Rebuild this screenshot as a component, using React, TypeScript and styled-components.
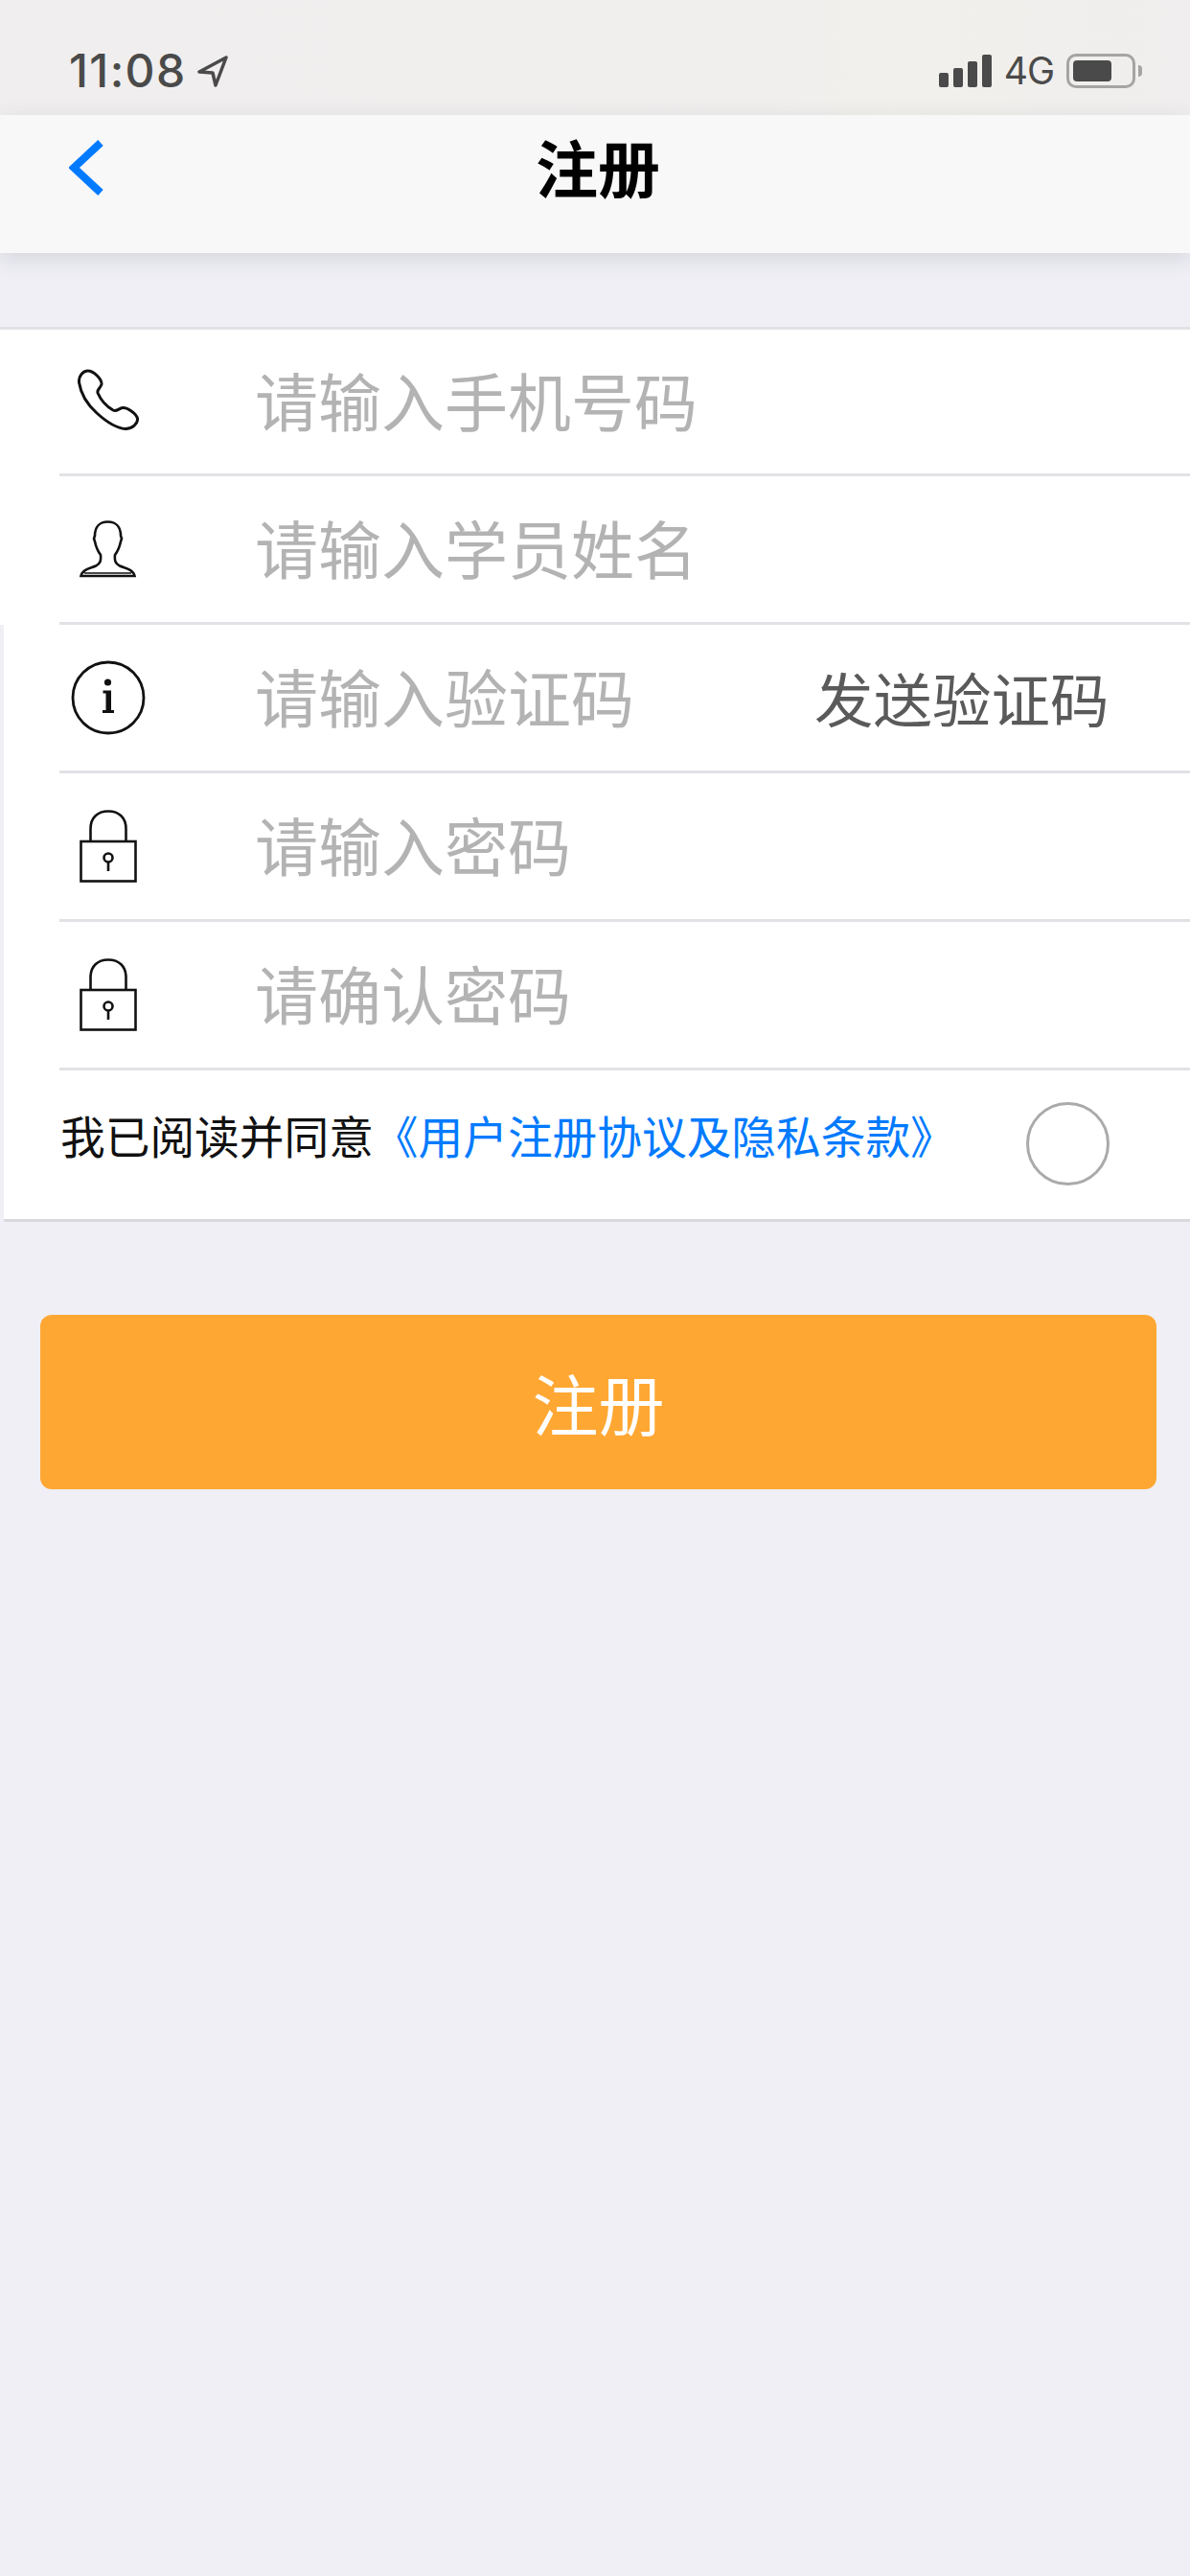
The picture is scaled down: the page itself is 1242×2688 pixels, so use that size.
import React from 'react'
import styled, { createGlobalStyle } from 'styled-components'

interface IField {
  id: number
  icon: React.ReactElement
  hint: string
  flush?: boolean
  action?: string
}

const PhoneIcon = (): React.ReactElement => (
  <svg width="64" height="64" viewBox="0 0 64 64" fill="none" stroke="#111" strokeWidth="3">
    <path d="M10 2 C5 2.500 1 8 1.500 14 C3 24 9 36 20 46 C31 56 42 62 50 62.500 C57 62.500 63 57 62.500 52 C62 47 52 40 47 40.500 C43 41 41 45 37 43 C30 39 24 32 21 25 C20 21 24 20 25 16 C25.500 11 17 1.500 10 2 Z" />
  </svg>
)

const PersonIcon = (): React.ReactElement => (
  <svg width="59" height="60" viewBox="0 0 59 60" fill="none" stroke="#111" strokeWidth="2.6">
    <path d="M1.500 58 H57.500 C56 51 48 50 42 47.500 C37 45 36.500 42 37 36 C40 32 42 27 43 22 L44 19 L43 16 C43 7 38 1.500 29.500 1.500 C21 1.500 16 7 16 16 L15 19 L16 22 C17 27 19 32 22 36 C22.500 42 22 45 17 47.500 C11 50 3 51 1.500 58 Z" />
    <path d="M5 55 H54" strokeWidth="1.500" />
  </svg>
)

const InfoIcon = (): React.ReactElement => (
  <svg width="78" height="78" viewBox="0 0 78 78" fill="none">
    <circle cx="39" cy="39" r="37" stroke="#111" strokeWidth="2.800" />
    <circle cx="38.500" cy="23" r="3.600" fill="#111" />
    <path d="M33.500 31.500 H42 V52 H45 V55 H33 V52 H36.500 V34.500 H33.500 Z" fill="#111" />
  </svg>
)

const LockIcon = (): React.ReactElement => (
  <svg width="60" height="76" viewBox="0 0 60 76" fill="none" stroke="#111" strokeWidth="2.600">
    <path d="M11.500 33 V20 C11.500 8 19 1.500 30 1.500 C41 1.500 48.500 8 48.500 20 V33" />
    <rect x="1.500" y="33" width="57" height="41.500" />
    <circle cx="30" cy="50" r="4.500" />
    <path d="M30 54.500 V64" />
  </svg>
)

const fields: IField[] = [
  { id: 1, icon: <PhoneIcon />, hint: '请输入手机号码', flush: true },
  { id: 2, icon: <PersonIcon />, hint: '请输入学员姓名', flush: true },
  { id: 3, icon: <InfoIcon />, hint: '请输入验证码', action: '发送验证码' },
  { id: 4, icon: <LockIcon />, hint: '请输入密码' },
  { id: 5, icon: <LockIcon />, hint: '请确认密码' },
]

const App = (): React.ReactElement => {
  return (
    <Page>
      <GlobalStyle />
      <StatusBar>
        <TimeWrap>
          <Time>11:08</Time>
          <svg width="32" height="33" viewBox="0 0 32 33" fill="none" stroke="#4a4a4a" strokeWidth="3.500" strokeLinejoin="round">
            <path d="M30 2 L2 17 L16 18 L19 31 Z" />
          </svg>
        </TimeWrap>
        <StatusRight>
          <Signal>
            <SignalBar $height={15} />
            <SignalBar $height={20} />
            <SignalBar $height={27} />
            <SignalBar $height={34} />
          </Signal>
          <Network>4G</Network>
          <Battery>
            <BatteryLevel />
          </Battery>
        </StatusRight>
      </StatusBar>
      <NavBar>
        <svg width="36" height="58" viewBox="0 0 36 58" fill="none" stroke="#007aff" strokeWidth="8" strokeLinejoin="miter">
          <path d="M33 3 L5 29 L33 55" />
        </svg>
        <NavTitle>注册</NavTitle>
      </NavBar>
      <Form>
        {fields.map((el) => (
          <Row key={el.id} $flush={el.flush}>
            <IconCell>{el.icon}</IconCell>
            <Hint>{el.hint}</Hint>
            {el.action && <SendCode>{el.action}</SendCode>}
          </Row>
        ))}
        <AgreeRow>
          <AgreeText>
            我已阅读并同意<AgreeLink>《用户注册协议及隐私条款》</AgreeLink>
          </AgreeText>
          <Radio />
        </AgreeRow>
      </Form>
      <SubmitButton>注册</SubmitButton>
    </Page>
  )
}

const GlobalStyle = createGlobalStyle`
  html, body {
    margin: 0;
    padding: 0;
  }
  body {
    font-family: "Liberation Sans", "Noto Sans CJK SC", sans-serif;
  }
`
const Page = styled.div`
  width: 1242px;
  min-height: 2688px;
  background: #efeff5;
  overflow: hidden;
`
const StatusBar = styled.div`
  height: 120px;
  box-sizing: border-box;
  padding: 56px 57px 0 72px;
  display: flex;
  justify-content: space-between;
  align-items: flex-start;
  background: linear-gradient(90deg, #f0eeee 0%, #f0efee 65%, #f1f0ec 75%, #f0eeee 100%);
`
const TimeWrap = styled.div`
  display: flex;
  align-items: center;
  gap: 11px;
`
const Time = styled.div`
  font-family: Inter, "Liberation Sans", sans-serif;
  font-size: 48px;
  font-weight: 500;
  line-height: 36px;
  letter-spacing: 1.4px;
  color: #4a4a4a;
`
const StatusRight = styled.div`
  display: flex;
  align-items: center;
  height: 36px;
`
const Signal = styled.div`
  display: flex;
  align-items: flex-end;
  gap: 5px;
  height: 34px;
`
const SignalBar = styled.div<{ $height: number }>`
  width: 10px;
  height: ${(p) => p.$height}px;
  border-radius: 2px;
  background: #4a4a4a;
`
const Network = styled.div`
  margin-left: 13px;
  font-family: Inter, "Liberation Sans", sans-serif;
  font-size: 39px;
  line-height: 36px;
  letter-spacing: -1px;
  color: #4a4a4a;
`
const Battery = styled.div`
  position: relative;
  width: 72px;
  height: 36px;
  margin-left: 13px;
  box-sizing: border-box;
  padding: 4px;
  border: 3px solid #a5a3a3;
  border-radius: 10px;
  &::after {
    content: '';
    position: absolute;
    top: 9px;
    right: -10px;
    width: 4px;
    height: 12px;
    border-radius: 0 4px 4px 0;
    background: #a5a3a3;
  }
`
const BatteryLevel = styled.div`
  width: 40px;
  height: 100%;
  border-radius: 4px;
  background: #4a4a4a;
`
const NavBar = styled.div`
  position: relative;
  z-index: 1;
  height: 144px;
  box-sizing: border-box;
  padding: 26px 0 0 72px;
  background: #f8f8f8;
  box-shadow: 0 6px 22px rgba(60, 60, 80, 0.14);
`
const NavTitle = styled.div`
  position: absolute;
  top: 26px;
  left: 6px;
  right: 0;
  text-align: center;
  font-size: 65px;
  line-height: 66px;
  font-weight: 700;
  color: #000;
`
const Form = styled.div`
  margin: 80px 0 0 4px;
  background: #fff;
  border-bottom: 3px solid #d9d9de;
`
const IconCell = styled.div`
  width: 266px;
  flex: none;
  padding-right: 41px;
  box-sizing: border-box;
  display: flex;
  justify-content: center;
  margin-top: -4px;
`
const Row = styled.div<{ $flush?: boolean }>`
  position: relative;
  height: 155px;
  margin-left: -4px;
  box-sizing: border-box;
  display: flex;
  align-items: center;
  background: #fff;
  box-shadow: ${(p) => (p.$flush ? 'none' : 'inset 4px 0 0 #efeff5')};
  &::after {
    content: '';
    position: absolute;
    left: 62px;
    right: 0;
    bottom: 0;
    height: 3px;
    background: #e2e2e6;
  }
  &:first-child {
    height: 153px;
    box-shadow: 0 -3px 0 #e2e2e6;
  }
  &:first-child ${IconCell} {
    margin-top: -8px;
  }
`
const Hint = styled.div`
  flex: 1;
  font-size: 66px;
  line-height: 70px;
  margin-top: 2px;
  color: #b3b3b3;
`
const SendCode = styled.div`
  width: 392px;
  flex: none;
  font-size: 61.5px;
  line-height: 70px;
  margin-top: 6px;
  color: #5a5a5a;
`
const AgreeRow = styled.div`
  height: 155px;
  padding: 0 84px 0 59px;
  display: flex;
  align-items: center;
  justify-content: space-between;
`
const AgreeText = styled.div`
  font-size: 46.7px;
  line-height: 60px;
  margin-top: -14px;
  color: #111;
  white-space: nowrap;
`
const AgreeLink = styled.span`
  color: #007aff;
`
const Radio = styled.div`
  width: 87px;
  height: 87px;
  margin-top: -2px;
  box-sizing: border-box;
  border: 3px solid #aaa;
  border-radius: 50%;
`
const SubmitButton = styled.div`
  height: 182px;
  margin: 97px 35px 0 42px;
  border-radius: 12px;
  display: flex;
  align-items: center;
  justify-content: center;
  font-size: 69px;
  color: #fff;
  background: #ffa733;
`
export default App
